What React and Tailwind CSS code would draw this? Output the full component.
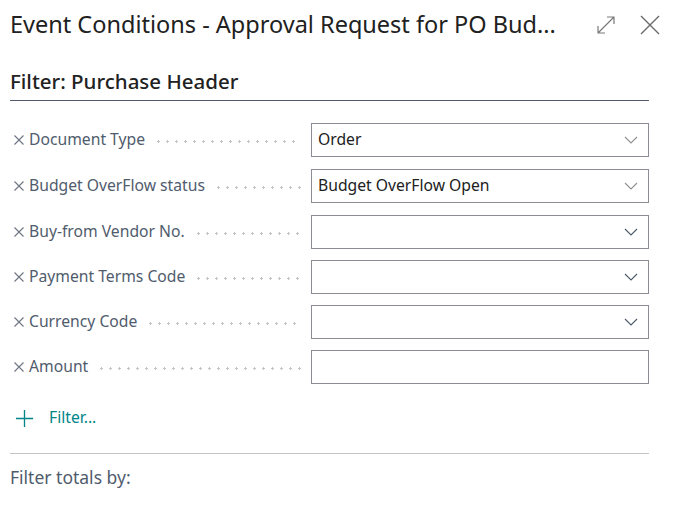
import React from "react";

const rows = [
  { label: "Document Type", value: "Order", select: true, light: true },
  { label: "Budget OverFlow status", value: "Budget OverFlow Open", select: true, light: true },
  { label: "Buy-from Vendor No.", value: "", select: true },
  { label: "Payment Terms Code", value: "", select: true },
  { label: "Currency Code", value: "", select: true },
  { label: "Amount", value: "", select: false },
];

const tops = ["mt-[22px]", "mt-[12px]", "mt-[12px]", "mt-[11px]", "mt-[11px]", "mt-[11px]"];

function Chevron({ light }) {
  return (
    <svg width="14" height="8" viewBox="0 0 14 8" className="shrink-0">
      <path d="M1 1 L7 7 L13 1" fill="none" stroke={light ? "#8f8f8f" : "#4a5a6a"} strokeWidth="1.1" />
    </svg>
  );
}

export default function App() {
  return (
    <div className="w-[676px] h-[505px] bg-white overflow-hidden" style={{ fontFamily: '"Segoe UI", "Noto Sans", sans-serif' }}>
      <div className="flex items-center h-[50px] pl-[10px] pr-[16px]">
        <div className="flex-1 text-[23.5px] text-[#212121] whitespace-nowrap">
          Event Conditions - Approval Request for PO Bud...
        </div>
        <svg width="20" height="20" viewBox="0 0 20 20" className="mr-[24px]">
          <path d="M2 18 L18 2 M11 2 H18 V9 M2 11 V18 H9" fill="none" stroke="#7a7a7a" strokeWidth="1.2" />
        </svg>
        <svg width="20" height="20" viewBox="0 0 20 20">
          <path d="M1 1 L19 19 M19 1 L1 19" fill="none" stroke="#6a6a6a" strokeWidth="1.4" />
        </svg>
      </div>
      <div className="mx-[10px] w-[639px]">
        <div className="pt-[18px] pb-[6px] text-[20.5px] text-[#212121] font-medium leading-[26px] border-b border-[#505c6d]">
          Filter: Purchase Header
        </div>
        {rows.map((r, i) => (
          <div key={r.label} className={`flex items-center h-[34px] ${tops[i]}`}>
            <div className="flex items-center w-[301px] shrink-0 pr-[10px] text-[15.7px] text-[#505c6d] whitespace-nowrap">
              <svg width="10" height="10" viewBox="0 0 10 10" className="ml-[4px] mr-[5px] shrink-0">
                <path d="M0.5 0.5 L9.5 9.5 M9.5 0.5 L0.5 9.5" fill="none" stroke="#6b7480" strokeWidth="1.1" />
              </svg>
              <span>{r.label}</span>
              <span className="flex-1 ml-[9px] mt-[4px] h-[3px] bg-[radial-gradient(circle,#c4c4c4_1px,transparent_1.3px)] bg-[length:9px_3px]" />
            </div>
            <div className="flex items-center justify-between w-[338px] shrink-0 h-[34px] border border-[#8a8d94] px-[6px] pr-[10px] text-[15.7px] text-[#212121]">
              <span>{r.value}</span>
              {r.select && <Chevron light={r.light} />}
            </div>
          </div>
        ))}
        <div className="flex items-center mt-[20px] h-[28px] text-[15.7px] text-[#00858a]">
          <svg width="19" height="19" viewBox="0 0 20 20" className="ml-[5px] mr-[15px]">
            <path d="M10 1 V19 M1 10 H19" fill="none" stroke="#00858a" strokeWidth="1.4" />
          </svg>
          <span>Filter...</span>
        </div>
        <div className="mt-[21px] border-t border-[#c4c4c4]" />
        <div className="mt-[11px] text-[17.5px] leading-[24px] text-[#505c6d]">Filter totals by:</div>
      </div>
    </div>
  );
}
